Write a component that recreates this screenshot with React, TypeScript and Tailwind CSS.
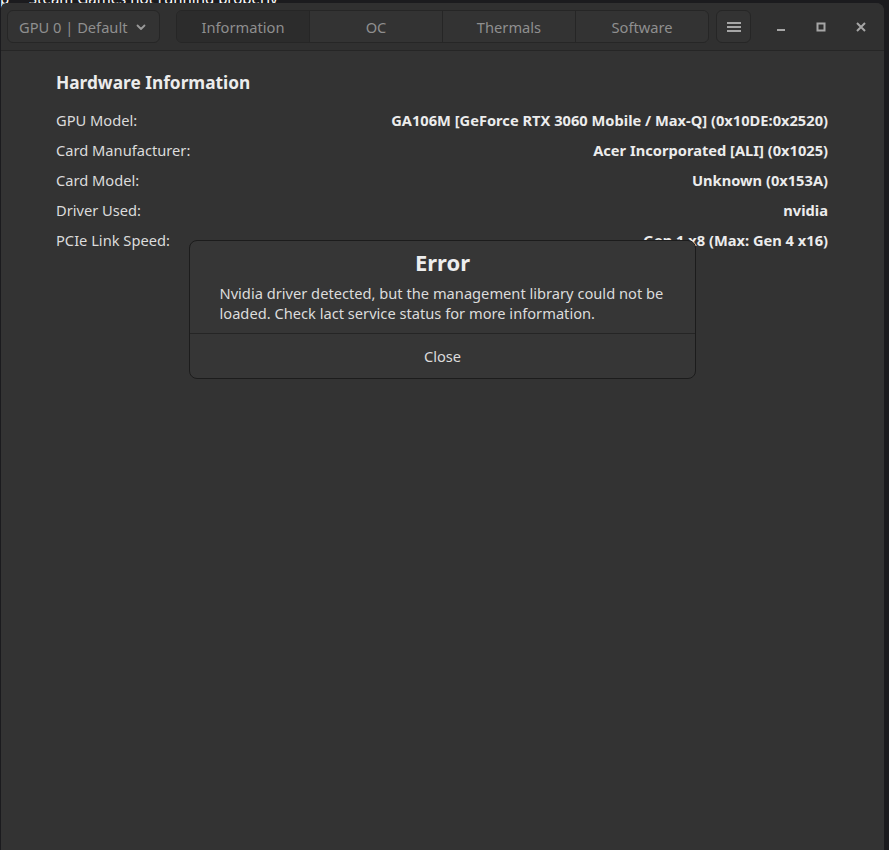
import React from "react";

const rows: [string, string][] = [
  ["GPU Model:", "GA106M [GeForce RTX 3060 Mobile / Max-Q] (0x10DE:0x2520)"],
  ["Card Manufacturer:", "Acer Incorporated [ALI] (0x1025)"],
  ["Card Model:", "Unknown (0x153A)"],
  ["Driver Used:", "nvidia"],
  ["PCIe Link Speed:", "Gen 1 x8 (Max: Gen 4 x16)"],
];

const tabs = ["Information", "OC", "Thermals", "Software"];

export default function App() {
  return (
    <div
      className="relative w-[889px] h-[850px] overflow-hidden bg-[#1b1b1e] text-[#dedede]"
      style={{ fontFamily: '"Noto Sans", "Open Sans", sans-serif' }}
    >
      <div className="absolute left-0 top-[-13px] text-[15px] text-white whitespace-nowrap">
        p&nbsp;&nbsp;·&nbsp;&nbsp;Steam Games not running properly
      </div>
      <div className="absolute left-[1px] top-[3px] w-[883px] h-[860px] rounded-tr-[8px] rounded-tl-[6px] bg-[#333333] flex flex-col overflow-hidden">
        {/* header */}
        <div className="h-[48px] shrink-0 bg-[#303030] border-b border-[#262626] flex items-center pl-[6px] pr-[7px]">
          <div className="w-[153px] h-[33px] rounded-[6px] border border-[#262626] bg-[#333333] flex items-center pl-[11px] pr-[12px] justify-between text-[14.67px] text-[#8f8f8f]">
            <span>GPU 0 | Default</span>
            <svg width="12" height="12" viewBox="0 0 12 12" fill="none">
              <path d="M2.5 4.5 6 8 9.5 4.5" stroke="#9a9a9a" strokeWidth="1.8" strokeLinecap="round" strokeLinejoin="round" />
            </svg>
          </div>
          <div className="ml-[16px] w-[533px] h-[33px] rounded-[6px] border border-[#262626] bg-[#333333] flex overflow-hidden">
            {tabs.map((t, i) => (
              <div
                key={t}
                className={
                  "flex-1 flex items-center justify-center text-[14.67px] text-[#8f8f8f] " +
                  (i > 0 ? "border-l border-[#262626] " : "") +
                  (i === 0 ? "bg-[#2c2c2c]" : "bg-[#333333]")
                }
              >
                {t}
              </div>
            ))}
          </div>
          <div className="ml-[7px] w-[35px] h-[33px] rounded-[6px] border border-[#262626] bg-[#333333] flex items-center justify-center">
            <svg width="16" height="14" viewBox="0 0 16 14">
              <rect x="1" y="2" width="14" height="2" fill="#a6a6a6" />
              <rect x="1" y="6" width="14" height="2" fill="#a6a6a6" />
              <rect x="1" y="10" width="14" height="2" fill="#a6a6a6" />
            </svg>
          </div>
          <div className="flex-1" />
          <div className="flex items-center gap-[24px] mr-[8px]">
            <div className="w-[16px] h-[16px] flex items-center justify-center">
              <svg width="16" height="16" viewBox="0 0 16 16">
                <rect x="4" y="10" width="8" height="2" fill="#a6a6a6" />
              </svg>
            </div>
            <div className="w-[16px] h-[16px] flex items-center justify-center">
              <svg width="16" height="16" viewBox="0 0 16 16">
                <rect x="4.5" y="4.5" width="7" height="7" fill="none" stroke="#a6a6a6" strokeWidth="2" />
              </svg>
            </div>
            <div className="w-[16px] h-[16px] flex items-center justify-center">
              <svg width="16" height="16" viewBox="0 0 16 16">
                <path d="M4 4 12 12 M12 4 4 12" stroke="#a6a6a6" strokeWidth="2" />
              </svg>
            </div>
          </div>
        </div>
        {/* body */}
        <div className="relative flex-1 px-[55px] pt-[19px]">
          <div className="text-[17.3px] font-bold text-[#ececec] leading-[26px]">Hardware Information</div>
          <div className="mt-[9px] flex flex-col">
            {rows.map(([k, v]) => (
              <div key={k} className="flex justify-between h-[30px] items-center text-[14.67px] pr-[1px]">
                <span className="text-[#dcdcdc]">{k}</span>
                <span className="font-bold text-[#ececec]">{v}</span>
              </div>
            ))}
          </div>
          {/* dialog */}
          <div className="absolute left-[188px] top-[189px] w-[507px] h-[139px] rounded-[8px] border border-[#1c1c1c] bg-[#363636] flex flex-col">
            <div className="flex-1 flex flex-col items-center pt-[7px]">
              <div className="text-[22px] font-bold text-[#ededed] leading-[28px]">Error</div>
              <div className="mt-[7px] w-[446px] text-[14.67px] leading-[20px] text-[#dcdcdc]">
                Nvidia driver detected, but the management library could not be loaded. Check lact service status for more information.
              </div>
            </div>
            <div className="h-[45px] shrink-0 border-t border-[#252525] flex items-center justify-center text-[14.67px] text-[#dcdcdc]">
              Close
            </div>
          </div>
        </div>
      </div>
    </div>
  );
}
